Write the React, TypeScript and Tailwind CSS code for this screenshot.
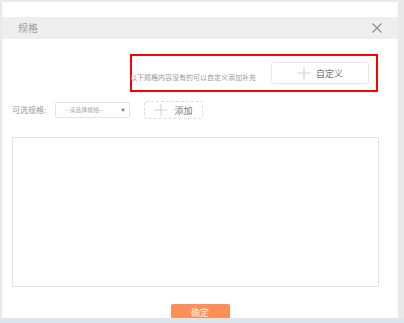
import React from "react";

const font = { fontFamily: '"Noto Sans CJK SC", "Noto Sans", sans-serif' };

function Plus({ className }: { className?: string }) {
  return (
    <svg width="14" height="14" viewBox="0 0 14 14" className={className}>
      <path d="M7 0.5V13.5M0.5 7H13.5" stroke="#cfcfcf" strokeWidth="1" fill="none" />
    </svg>
  );
}

export default function App() {
  return (
    <div
      className="w-[404px] h-[323px] overflow-hidden bg-[#e9e9e9] flex flex-col"
      style={font}
    >
      <div className="flex-1 min-h-0 ml-[2px] mr-[6px] mt-[2px] bg-white flex flex-col overflow-hidden">
        <div className="h-[15px] shrink-0" />
        <div className="h-[22px] shrink-0 bg-[#eeeeee] flex items-center justify-between pl-[16px] pr-[16px]">
          <span className="text-[10px] text-[#a0a0a0] leading-none">规格</span>
          <svg width="10" height="10" viewBox="0 0 10 10">
            <path d="M0.5 0.5L9.5 9.5M9.5 0.5L0.5 9.5" stroke="#8a8a8a" strokeWidth="1.1" fill="none" />
          </svg>
        </div>
        <div className="mt-[15px] ml-[128px] mr-[20px] h-[38px] border-2 border-[#ff0000] flex items-center justify-between pr-[7px] shrink-0">
          <span className="text-[7px] text-[#999999] leading-none mt-[8px] -ml-[2px] whitespace-nowrap">
            以下规格内容没有的可以自定义添加补充
          </span>
          <div className="w-[98px] h-[22px] border border-[#e6e6e6] rounded-[3px] flex items-center justify-center gap-[5px]">
            <Plus />
            <span className="text-[9px] text-[#777777] leading-none">自定义</span>
          </div>
        </div>
        <div className="mt-[9px] ml-[10px] flex items-center shrink-0">
          <span className="text-[8px] text-[#999999] leading-none w-[43px]">可选规格:</span>
          <div className="w-[75px] h-[16px] border border-[#e3e3e3] rounded-[2px] flex items-center justify-between pl-[9px] pr-[4px]">
            <span className="text-[6px] text-[#aaaaaa] leading-none whitespace-nowrap">--请选择规格--</span>
            <span className="text-[4px] text-[#777777] leading-none">▼</span>
          </div>
          <div className="ml-[14px] w-[59px] h-[18px] border border-dashed border-[#dddddd] rounded-[2px] flex items-center justify-center gap-[6px]">
            <Plus />
            <span className="text-[9px] text-[#777777] leading-none">添加</span>
          </div>
        </div>
        <div className="mt-[18px] ml-[10px] mr-[19px] h-[150px] border border-[#e2e2e2] shrink-0" />
        <div className="mt-[17px] flex justify-center shrink-0">
          <div className="w-[59px] h-[20px] bg-[#ff8f58] rounded-t-[2px] flex items-start justify-center pt-[4px]">
            <span className="text-[9px] text-[#fff3ec] leading-none">确定</span>
          </div>
        </div>
      </div>
      <div className="h-[5px] shrink-0 bg-[#dbe5ed]" />
    </div>
  );
}
